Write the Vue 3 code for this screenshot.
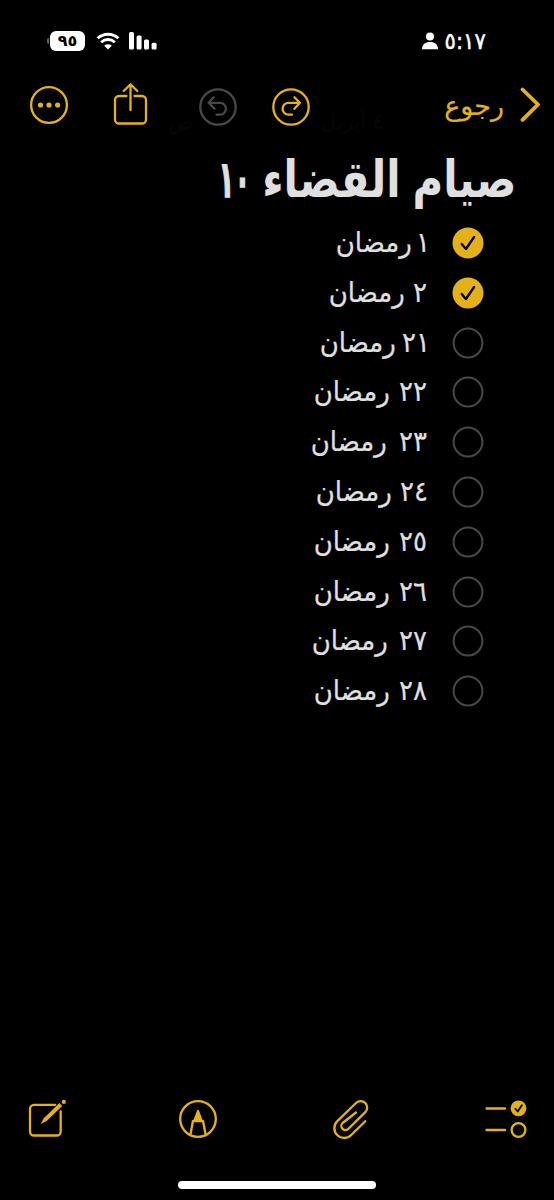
<template>
  <div class="screen">
    <header class="status-bar">
      <div class="status-icons">
        <div class="battery">
          <span class="battery-tip"></span>
          <span class="battery-level">٩٥</span>
        </div>
        <svg class="wifi" width="24" height="18" viewBox="0 0 24 18">
          <path d="M1.6 6.3a15.2 15.2 0 0 1 20.8 0" />
          <path d="M5.2 10.2a10 10 0 0 1 13.6 0" />
          <path class="fill" d="M12 17.6l-3.8-3.9a5.6 5.6 0 0 1 7.6 0z" />
        </svg>
        <svg class="signal" width="28" height="18" viewBox="0 0 28 18">
          <rect x="0" y="0" width="5" height="17.5" rx="1.5" />
          <rect x="7.6" y="3.6" width="5" height="13.9" rx="1.5" />
          <rect x="15" y="7.4" width="5" height="10.1" rx="1.5" />
          <rect x="22.6" y="10.8" width="5" height="6.7" rx="1.5" />
        </svg>
      </div>
      <div class="status-time">
        <svg width="16" height="18" viewBox="0 0 16 18">
          <circle cx="8" cy="4.4" r="4" />
          <path d="M0 17.2c0-4.6 3.2-7.2 8-7.2s8 2.6 8 7.2z" />
        </svg>
        <span class="time">٥:١٧</span>
      </div>
    </header>

    <nav class="top-nav">
      <button class="icon-btn more" aria-label="المزيد">
        <svg width="40" height="40" viewBox="0 0 40 40">
          <circle cx="20" cy="20" r="17.9" />
          <circle class="fill" cx="11.5" cy="20" r="2.6" />
          <circle class="fill" cx="20" cy="20" r="2.6" />
          <circle class="fill" cx="28.6" cy="20" r="2.6" />
        </svg>
      </button>
      <button class="icon-btn share" aria-label="مشاركة">
        <svg width="36" height="44" viewBox="0 0 36 44">
          <path d="M13.5 14H6a4 4 0 0 0-4 4v19.500a4 4 0 0 0 4 4h23a4 4 0 0 0 4-4V18a4 4 0 0 0-4-4h-7.500" />
          <path d="M17.5 28V2.500M10.700 9l6.800-6.800L24.300 9" />
        </svg>
      </button>
      <button class="icon-btn undo" aria-label="تراجع">
        <svg width="40" height="40" viewBox="0 0 40 40">
          <circle cx="20" cy="20" r="17.7" />
          <path d="M15.6 10.3L10.6 15.8l6 6M11 15.800h11a5.900 5.900 0 0 1 0 11.900h-3.500" />
        </svg>
      </button>
      <button class="icon-btn redo" aria-label="إعادة">
        <svg width="40" height="40" viewBox="0 0 40 40">
          <circle cx="20" cy="20" r="17.7" />
          <path d="M23.4 10.300L28.900 15.800l-5.500 6M28.500 15.800H17.500a5.900 5.900 0 0 0 0 11.900h3.500" />
        </svg>
      </button>
      <button class="back">
        <span class="back-label">رجوع</span>
        <svg width="21" height="36" viewBox="0 0 21 36">
          <path d="M2.5 2.500L18 17.500 2.500 32.800" />
        </svg>
      </button>
      <div class="note-date" dir="rtl">
        <span>٤ أبريل</span>
        <span>ص</span>
      </div>
    </nav>

    <main class="note" dir="rtl">
      <h1><span class="title">صيام القضاء <span class="title-number">١٠</span></span></h1>
      <ul class="checklist">
        <li v-for="item in items" :key="item.day" @click="item.done = !item.done">
          <svg class="check" :class="{ done: item.done }" width="32" height="32" viewBox="0 0 32 32">
            <circle cx="16" cy="16" :r="item.done ? 15.5 : 14.4" />
            <path v-if="item.done" d="M9.7 17l4.200 5 8.200-12" />
          </svg>
          <span class="label" :style="{ marginRight: item.offset + 'px', wordSpacing: item.gap + 'px' }">{{ item.day }} رمضان</span>
        </li>
      </ul>
    </main>

    <footer class="bottom-bar">
      <button class="icon-btn compose" aria-label="ملاحظة جديدة">
        <svg width="40" height="40" viewBox="0 0 40 40">
          <path d="M27.2 5.800H6a4 4 0 0 0-4 4v22.700a4 4 0 0 0 4 4h22.700a4 4 0 0 0 4-4V12.500" />
          <path class="fill" d="M31.4 4.100l2.800 2.800L18.600 22.100l-5.900 3 3.100-5.800z" />
          <circle class="fill" cx="35.8" cy="2.9" r="2.1" />
        </svg>
      </button>
      <button class="icon-btn markup" aria-label="رسم">
        <svg width="40" height="40" viewBox="0 0 40 40">
          <circle cx="20" cy="20" r="17.8" />
          <path class="fill" d="M20 10.800c.6 0 1 .6 1.200 1.200L25.200 22.700H14.800L18.800 12c.2-.6.600-1.200 1.200-1.200z" />
          <path d="M15 22L12.500 35M25 22L27.500 35M14.800 22.200h10.400" />
        </svg>
      </button>
      <button class="icon-btn attach" aria-label="إرفاق">
        <svg width="38" height="42" viewBox="0 0 38 42">
          <path d="M33.3 23.200L19.200 37a9.700 9.700 0 0 1-14.100-13.600L24 5a6.400 6.400 0 0 1 9.300 9.100L16.500 30.800a4.100 4.100 0 0 1-5.900-5.800L24 14.500" />
        </svg>
      </button>
      <button class="icon-btn list" aria-label="قائمة تحقق">
        <svg width="44" height="42" viewBox="0 0 44 42">
          <path d="M2.5 10.500h18.600M2.500 32h18.600" />
          <circle class="fill" cx="34.5" cy="10.3" r="7.9" />
          <path class="tick" d="M31.4 10.700l2.300 2.800 4.200-6.300" />
          <circle cx="34.5" cy="32" r="6.9" />
        </svg>
      </button>
    </footer>
    <div class="home-indicator"></div>
  </div>
</template>

<script setup>
import { ref } from 'vue';

const items = ref([
  { day: '١', done: true, offset: -3, gap: -4 },
  { day: '٢', done: true, offset: 0, gap: 0 },
  { day: '٢١', done: false, offset: -3, gap: -2 },
  { day: '٢٢', done: false, offset: 0, gap: 1 },
  { day: '٢٣', done: false, offset: 0, gap: 4 },
  { day: '٢٤', done: false, offset: -1, gap: 0 },
  { day: '٢٥', done: false, offset: 0, gap: 1 },
  { day: '٢٦', done: false, offset: 0, gap: 1 },
  { day: '٢٧', done: false, offset: 0, gap: 3 },
  { day: '٢٨', done: false, offset: 0, gap: 1 }
]);
</script>

<style>
body {
  margin: 0;
  background: #000;
}
</style>

<style scoped>
.screen {
  width: 554px;
  height: 1200px;
  box-sizing: border-box;
  overflow: hidden;
  isolation: isolate;
  display: flex;
  flex-direction: column;
  background: #000;
  color: #e0e0e0;
  font-family: 'DejaVu Sans', sans-serif;
}

button {
  background: none;
  border: none;
  padding: 0;
  font-family: inherit;
  cursor: pointer;
}

svg {
  display: block;
  flex: none;
}

/* STATUS BAR */
.status-bar {
  height: 82px;
  box-sizing: border-box;
  padding: 0 68px 0 47px;
  display: flex;
  justify-content: space-between;
  align-items: center;
  color: #fff;
}

.status-icons,
.status-time,
.battery {
  display: flex;
  align-items: center;
}

.battery {
  gap: 1px;
}

.battery-tip {
  width: 2px;
  height: 6px;
  border-radius: 2px 0 0 2px;
  background: #666;
}

.battery-level {
  width: 35px;
  height: 20px;
  border-radius: 6px;
  background: #fff;
  color: #000;
  font-size: 16px;
  font-weight: bold;
  line-height: 19px;
  text-align: center;
}

.wifi {
  margin-left: 10.5px;
  fill: none;
  stroke: #fff;
  stroke-width: 2.9;
}

.wifi .fill {
  fill: #fff;
  stroke: none;
}

.signal {
  margin-left: 9.5px;
  fill: #fff;
}

.status-time {
  gap: 3px;
}

.status-time svg {
  fill: #fff;
}

.time {
  font-size: 23px;
  line-height: 30px;
  transform: scaleX(0.92);
  transform-origin: right center;
  -webkit-text-stroke: 0.5px #fff;
}

/* TOP NAV */
.top-nav {
  position: relative;
  height: 66px;
  box-sizing: border-box;
  padding: 0 13px 0 29px;
  display: flex;
  align-items: flex-start;
}

.icon-btn svg {
  fill: none;
  stroke: #e5b11a;
  stroke-width: 2.3;
  stroke-linecap: round;
  stroke-linejoin: round;
}

.icon-btn .fill {
  fill: #e5b11a;
  stroke: none;
}

.more {
  margin-top: 3px;
}

.share {
  margin-left: 44px;
}

.undo {
  margin: 5px 0 0 49px;
}

.undo svg {
  stroke: #49494b;
}

.redo {
  margin: 5px 0 0 33px;
}

.back {
  margin: 5px 0 0 auto;
  display: flex;
  align-items: flex-start;
  gap: 16px;
  color: #e5b11a;
}

.back-label {
  font-size: 27px;
  line-height: 38px;
  -webkit-text-stroke: 0.2px #e5b11a;
}

.back svg {
  fill: none;
  stroke: #e5b11a;
  stroke-width: 3.8;
  stroke-linecap: round;
  stroke-linejoin: round;
}

/* date scrolled under the bar, barely visible */
.note-date {
  position: absolute;
  left: 168px;
  right: 170px;
  top: 28px;
  display: flex;
  justify-content: space-between;
  font-size: 21px;
  color: #060606;
  z-index: -1;
}

/* NOTE */
.note {
  flex: 1;
  padding: 0 38px;
}

h1 {
  margin: 0;
  height: 70.2px;
  font-size: 47px;
  line-height: 64px;
  font-weight: bold;
  white-space: nowrap;
}

.title {
  display: inline-block;
  transform-origin: right center;
  word-spacing: -3px;
  transform: scale(0.89, 1.08);
}

.title-number {
  display: inline-block;
  transform: scaleX(0.62);
  transform-origin: right center;
  -webkit-text-stroke: 1.4px #e0e0e0;
}

.checklist {
  margin: 0;
  padding: 0 32px 0 0;
  list-style: none;
}

.checklist li {
  height: 49.8px;
  display: flex;
  align-items: center;
  gap: 25px;
}

.check {
  fill: none;
  stroke: #48484a;
  stroke-width: 2;
}

.check.done circle {
  fill: #e5b11a;
  stroke: none;
}

.check.done path {
  stroke: #000;
  stroke-width: 2.3;
  stroke-linecap: round;
  stroke-linejoin: round;
}

.label {
  padding-bottom: 2px;
  font-size: 26px;
  line-height: 40px;
  white-space: nowrap;
  transform: scaleY(1.08);
  -webkit-text-stroke: 0.2px #e0e0e0;
}

/* BOTTOM BAR */
.bottom-bar {
  height: 84px;
  box-sizing: border-box;
  padding: 2px 26px 0 28px;
  display: flex;
  align-items: flex-start;
}

.markup {
  margin-left: 110px;
}

.attach {
  margin: -1px 0 0 114px;
}

.list {
  margin: -1px 0 0 auto;
}

.icon-btn .tick {
  stroke: #000;
  stroke-width: 1.8;
}

.home-indicator {
  width: 198px;
  height: 8px;
  margin: 0 auto 11px;
  border-radius: 4px;
  background: #fff;
}
</style>
